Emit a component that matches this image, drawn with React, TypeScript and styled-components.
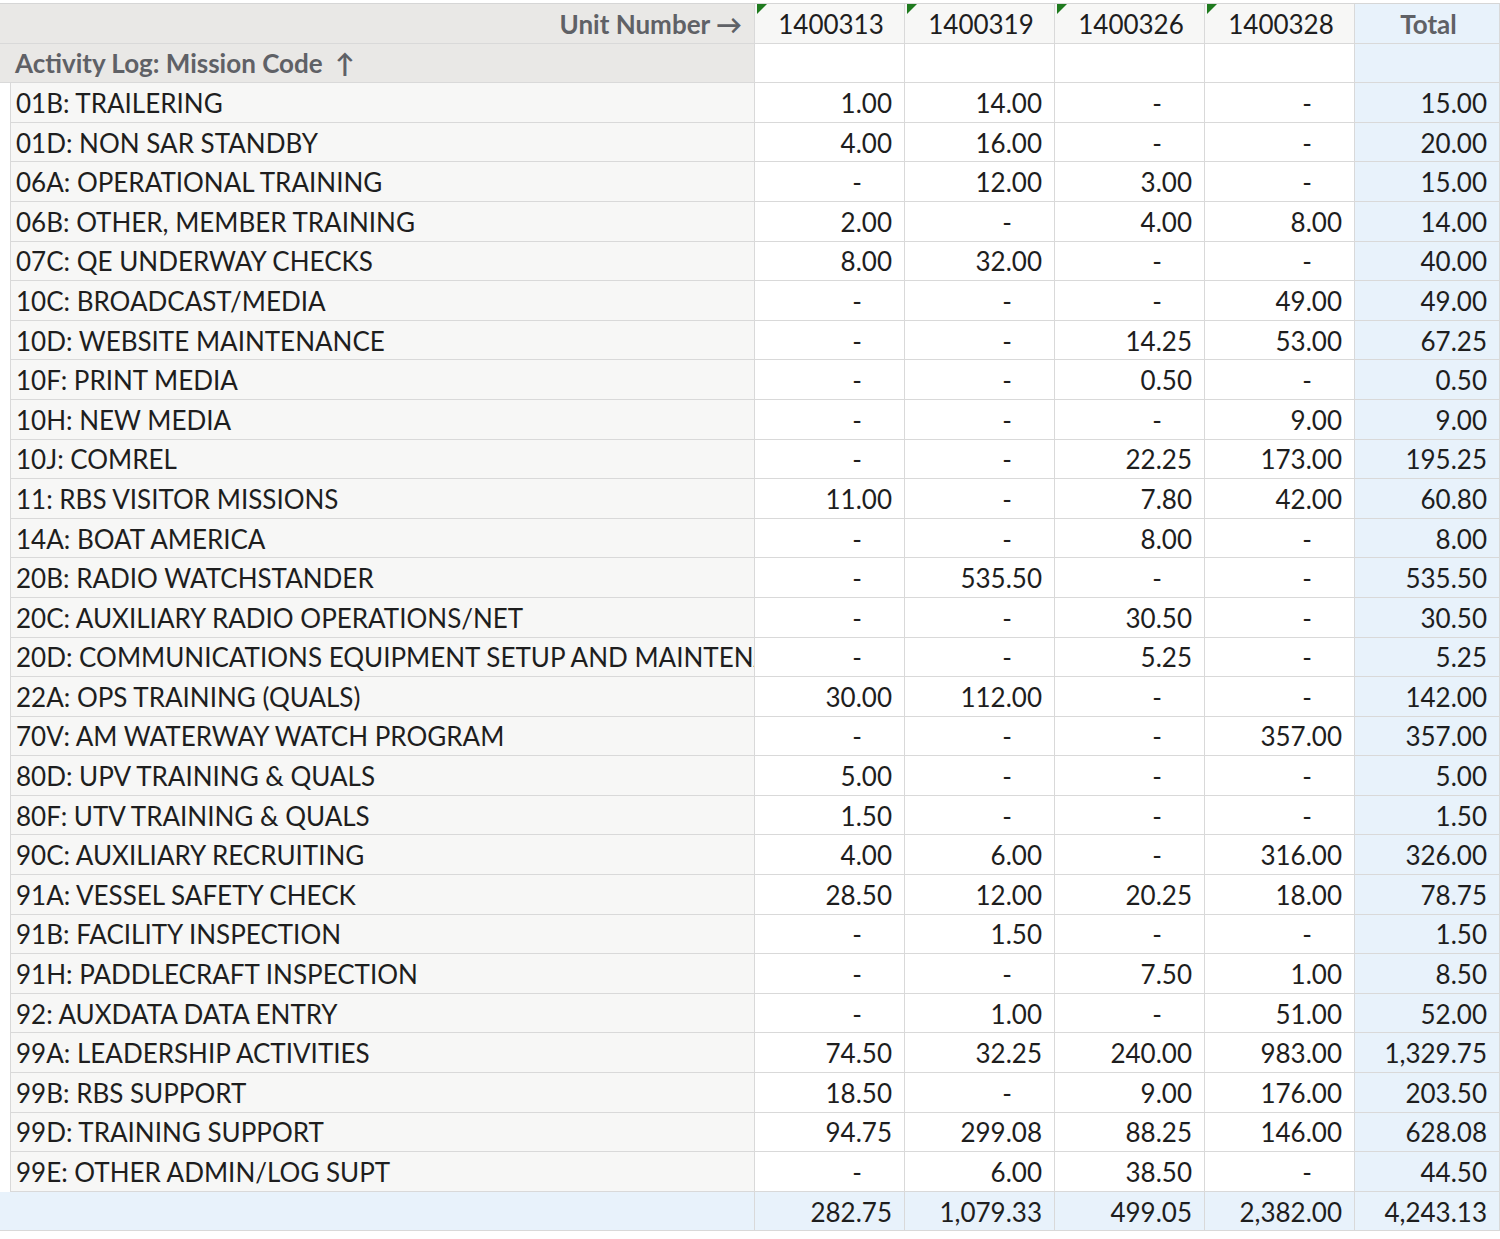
import React from "react";
import styled, { createGlobalStyle } from "styled-components";

const G = createGlobalStyle`
  body { margin: 0; background: #fff; font-family: Lato, "Open Sans", sans-serif; }
`;

const Table = styled.div`
  margin-top: 3px;
  display: grid;
  grid-template-columns: 755px 150px 150px 150px 150px 145px;
  grid-auto-rows: 39.6px;
  width: 1500px;
  border-top: 1px solid #d6d6d6;
`;

type CellProps = { $kind: "hlabel" | "head" | "label" | "num" | "total" | "foot"; $align?: string; $bold?: boolean };

const bg = { hlabel: "#e9e8e6", head: "#f7f7f6", label: "#f7f7f6", num: "#ffffff", total: "#e8f2fb", foot: "#e8f2fb" };

const Cell = styled.div<CellProps>`
  position: relative;
  background: ${(p) => bg[p.$kind]};
  border-right: 1px solid #d9d9d9;
  border-bottom: 1px solid #d9d9d9;
  display: flex;
  align-items: center;
  justify-content: ${(p) => p.$align || "flex-end"};
  padding: 1px 12px 0 15px;
  font-size: 26px;
  color: ${(p) => (p.$bold ? "#5f6166" : "#1e1e1e")};
  font-weight: ${(p) => (p.$bold ? 700 : 400)};
  white-space: nowrap;
  overflow: hidden;
  box-sizing: border-box;
`;

const Flag = styled.span`
  position: absolute;
  left: 2px;
  top: 0;
  width: 0;
  height: 0;
  border-top: 10px solid #1f7a1f;
  border-right: 10px solid transparent;
`;

const LabelCell = styled(Cell)`
  border-left: 1px solid #d9d9d9;
  margin-left: 10px;
  padding-left: 5px;
`;

const rows: [string, string[], string][] = [
  ["01B: TRAILERING", ["1.00", "14.00", "-", "-"], "15.00"],
  ["01D: NON SAR STANDBY", ["4.00", "16.00", "-", "-"], "20.00"],
  ["06A: OPERATIONAL TRAINING", ["-", "12.00", "3.00", "-"], "15.00"],
  ["06B: OTHER, MEMBER TRAINING", ["2.00", "-", "4.00", "8.00"], "14.00"],
  ["07C: QE UNDERWAY CHECKS", ["8.00", "32.00", "-", "-"], "40.00"],
  ["10C: BROADCAST/MEDIA", ["-", "-", "-", "49.00"], "49.00"],
  ["10D: WEBSITE MAINTENANCE", ["-", "-", "14.25", "53.00"], "67.25"],
  ["10F: PRINT MEDIA", ["-", "-", "0.50", "-"], "0.50"],
  ["10H: NEW MEDIA", ["-", "-", "-", "9.00"], "9.00"],
  ["10J: COMREL", ["-", "-", "22.25", "173.00"], "195.25"],
  ["11: RBS VISITOR MISSIONS", ["11.00", "-", "7.80", "42.00"], "60.80"],
  ["14A: BOAT AMERICA", ["-", "-", "8.00", "-"], "8.00"],
  ["20B: RADIO WATCHSTANDER", ["-", "535.50", "-", "-"], "535.50"],
  ["20C: AUXILIARY RADIO OPERATIONS/NET", ["-", "-", "30.50", "-"], "30.50"],
  ["20D: COMMUNICATIONS EQUIPMENT SETUP AND MAINTENANCE", ["-", "-", "5.25", "-"], "5.25"],
  ["22A: OPS TRAINING (QUALS)", ["30.00", "112.00", "-", "-"], "142.00"],
  ["70V: AM WATERWAY WATCH PROGRAM", ["-", "-", "-", "357.00"], "357.00"],
  ["80D: UPV TRAINING & QUALS", ["5.00", "-", "-", "-"], "5.00"],
  ["80F: UTV TRAINING & QUALS", ["1.50", "-", "-", "-"], "1.50"],
  ["90C: AUXILIARY RECRUITING", ["4.00", "6.00", "-", "316.00"], "326.00"],
  ["91A: VESSEL SAFETY CHECK", ["28.50", "12.00", "20.25", "18.00"], "78.75"],
  ["91B: FACILITY INSPECTION", ["-", "1.50", "-", "-"], "1.50"],
  ["91H: PADDLECRAFT INSPECTION", ["-", "-", "7.50", "1.00"], "8.50"],
  ["92: AUXDATA DATA ENTRY", ["-", "1.00", "-", "51.00"], "52.00"],
  ["99A: LEADERSHIP ACTIVITIES", ["74.50", "32.25", "240.00", "983.00"], "1,329.75"],
  ["99B: RBS SUPPORT", ["18.50", "-", "9.00", "176.00"], "203.50"],
  ["99D: TRAINING SUPPORT", ["94.75", "299.08", "88.25", "146.00"], "628.08"],
  ["99E: OTHER ADMIN/LOG SUPT", ["-", "6.00", "38.50", "-"], "44.50"],
];

const units = ["1400313", "1400319", "1400326", "1400328"];
const totals = ["282.75", "1,079.33", "499.05", "2,382.00"];

const Num = ({ v }: { v: string }) => (
  <Cell $kind="num" $align="flex-end" style={v === "-" ? { paddingRight: 42 } : undefined}>{v}</Cell>
);

export default function App() {
  return (
    <>
      <G />
      <Table>
        <Cell $kind="hlabel" $bold>Unit Number →</Cell>
        {units.map((u) => (
          <Cell key={u} $kind="head" $align="center"><Flag />{u}</Cell>
        ))}
        <Cell $kind="total" $align="center" $bold>Total</Cell>

        <Cell $kind="hlabel" $bold $align="flex-start">Activity Log: Mission Code&nbsp;&nbsp;↑</Cell>
        {units.map((u) => <Cell key={u} $kind="num" />)}
        <Cell $kind="total" />

        {rows.map(([label, vals, tot]) => (
          <React.Fragment key={label}>
            <LabelCell $kind="label" $align="flex-start">{label}</LabelCell>
            {vals.map((v, i) => <Num key={i} v={v} />)}
            <Cell $kind="total">{tot}</Cell>
          </React.Fragment>
        ))}

        <Cell $kind="foot" />
        {totals.map((t) => <Cell key={t} $kind="foot">{t}</Cell>)}
        <Cell $kind="foot">4,243.13</Cell>
      </Table>
    </>
  );
}
